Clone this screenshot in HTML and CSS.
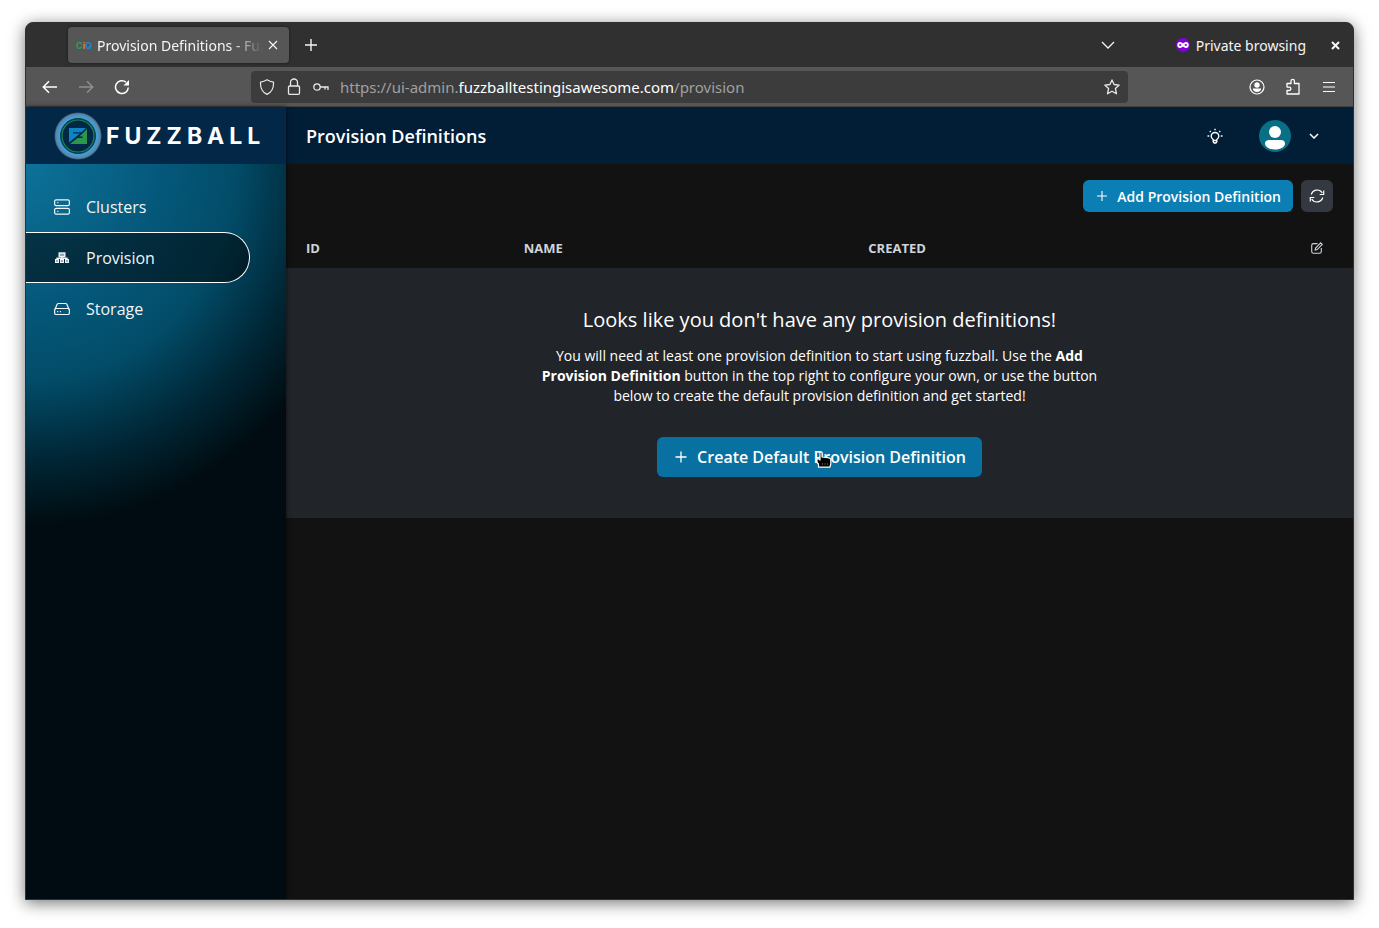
FILE: index.html
```html
<!DOCTYPE html>
<html lang="en">
<head>
<meta charset="utf-8">
<title>Provision Definitions - Fuzzball</title>
<link rel="stylesheet" href="styles.css">
</head>
<body>
<div class="window">
  <div class="tabbar">
    <div class="tab">
      <span class="favicon" aria-hidden="true"><span class="fav-c">C</span><span class="fav-i">i</span><span class="fav-q">Q</span></span>
      <span class="tab-title">Provision Definitions - Fuzzball</span>
      <button class="tab-close" aria-label="Close tab"><svg width="10" height="10" viewBox="0 0 10 10"><path d="M1 1l8 8M9 1l-8 8" stroke="currentColor" stroke-width="1.1"/></svg></button>
    </div>
    <button class="chrome-button" aria-label="New tab"><svg width="14" height="14" viewBox="0 0 14 14"><path d="M7 1v12M1 7h12" stroke="currentColor" stroke-width="1.4"/></svg></button>
    <span class="spacer"></span>
    <button class="chrome-button list-tabs" aria-label="List all tabs"><svg width="14" height="8" viewBox="0 0 14 8" fill="none"><path d="M1 1l6 6 6-6" stroke="currentColor" stroke-width="1.3"/></svg></button>
    <span class="private"><svg width="14" height="14" viewBox="0 0 14 14"><circle cx="7" cy="7" r="7" fill="#8000d7"/><path d="M7 7C5.500 4.500 2.200 4.200 2.200 7S5.500 9.500 7 7s4.800-2.800 4.800 0S8.500 9.500 7 7z" fill="none" stroke="#fff" stroke-width="1.900"/></svg>Private browsing</span>
    <button class="window-close" aria-label="Close window"><svg width="9" height="9" viewBox="0 0 9 9"><path d="M1 1l7 7M8 1l-7 7" stroke="currentColor" stroke-width="2"/></svg></button>
  </div>
  <div class="toolbar">
    <button class="chrome-button" aria-label="Back"><svg width="16" height="16" viewBox="0 0 16 16" fill="none" stroke="currentColor" stroke-width="1.500"><path d="M15 8H1.500M7 2.200L1.300 8 7 13.800"/></svg></button>
    <button class="chrome-button" aria-label="Forward" disabled><svg width="16" height="16" viewBox="0 0 16 16" fill="none" stroke="currentColor" stroke-width="1.500"><path d="M1 8h13.500M9 2.200L14.700 8 9 13.800"/></svg></button>
    <button class="chrome-button" aria-label="Reload"><svg width="16" height="16" viewBox="0 0 16 16" fill="none"><path d="M14.300 8.500A6.400 6.400 0 1 1 12 3.200" stroke="currentColor" stroke-width="1.500"/><path d="M15 1v5.500H9.500z" fill="currentColor"/></svg></button>
    <span class="spring"></span>
    <div class="urlbar">
      <svg width="16" height="16" viewBox="0 0 16 16" fill="none" stroke="currentColor" stroke-width="1.200"><path d="M8 .8c2 1.300 4 2 6.500 2.300.3 6-1.500 10-6.500 12.300C3 13.100 1.200 9.100 1.500 3.100 4 2.800 6 2.100 8 .8z" stroke-linejoin="round"/></svg>
      <svg width="16" height="18" viewBox="0 0 16 18" fill="none" stroke="currentColor" stroke-width="1.300"><rect x="2.500" y="8" width="11" height="8.300" rx="1.200"/><path d="M4.500 8V4.500a3.500 3.500 0 0 1 7 0V8"/></svg>
      <svg width="16" height="16" viewBox="0 0 16 16" fill="none" stroke="currentColor" stroke-width="1.300"><circle cx="4" cy="8" r="3.200"/><path d="M7.200 8H15v3M12 8v2.500"/></svg>
      <span class="url" role="textbox" aria-label="Address">https://ui-admin.<b>fuzzballtestingisawesome.com</b>/provision</span>
      <button class="star" aria-label="Bookmark this page"><svg width="16" height="16" viewBox="0 0 16 16" fill="none" stroke="currentColor" stroke-width="1.300" stroke-linejoin="round"><path d="M8 .9l2.100 4.600 5.100.6-3.800 3.400 1.100 5.300L8 12.200l-4.500 2.600 1.100-5.300L.8 6.100l5.100-.6z"/></svg></button>
    </div>
    <span class="spring"></span>
    <button class="chrome-button" aria-label="Account"><svg width="16" height="16" viewBox="0 0 16 16"><circle cx="8" cy="8" r="7" fill="none" stroke="currentColor" stroke-width="1.200"/><circle cx="8" cy="6" r="2.700" fill="currentColor"/><path d="M3.800 9.500h8.400c0 2-1.800 3.500-4.200 3.500s-4.200-1.500-4.200-3.500z" fill="currentColor"/></svg></button>
    <button class="chrome-button" aria-label="Extensions"><svg width="16" height="18" viewBox="0 0 16 18" fill="none" stroke="currentColor" stroke-width="1.300" stroke-linejoin="round"><path d="M2 9V5.500h4V3a1.700 1.700 0 0 1 3.400 0v2.500H14V16H2v-3.500h2.200a1.700 1.700 0 0 0 0-3.400H2z"/></svg></button>
    <button class="chrome-button" aria-label="Menu"><svg width="12" height="12" viewBox="0 0 12 12" stroke="currentColor" stroke-width="1.200"><path d="M0 1.500h12M0 6h12M0 10.500h12"/></svg></button>
  </div>
  <div class="app">
    <aside class="sidebar">
      <div class="brand">
        <svg class="brand-mark" width="48" height="48" viewBox="0 0 48 48">
          <defs><radialGradient id="glow"><stop offset=".76" stop-color="#38a3dd"/><stop offset=".84" stop-color="#4f93c2"/><stop offset=".93" stop-color="#5d81a3"/><stop offset="1" stop-color="#5d81a3" stop-opacity="0"/></radialGradient></defs>
          <circle cx="24" cy="24" r="24" fill="url(#glow)"/>
          <circle cx="24" cy="24" r="17.500" fill="#022747" stroke="#0a3f60"/>
          <circle cx="24" cy="24" r="16" fill="none" stroke="#218a48" stroke-width="1.200"/>
          <path d="M15 16h17l-4.500 4.200H19v1.300h7L15 30.500z" fill="#0c85c4"/>
          <path d="M33 17v15H16l7.500-6h5v-1.500h-3.300L29 21z" fill="#28984b"/>
        </svg>
        <span class="wordmark">FUZZBALL</span>
      </div>
      <nav class="nav">
        <a class="nav-item" href="#clusters"><svg width="16" height="16" viewBox="0 0 16 16" fill="none" stroke="currentColor" stroke-width="1.200"><rect x=".6" y=".8" width="14.800" height="5.800" rx="1.600"/><rect x=".6" y="9.400" width="14.800" height="5.800" rx="1.600"/><path d="M3 3.700h1.500M3 12.300h1.500" stroke-opacity=".7"/></svg>Clusters</a>
        <a class="nav-item active" href="#provision" aria-current="page"><svg width="16" height="16" viewBox="0 0 16 16" fill="none" stroke="currentColor" stroke-width="1.400"><rect x="5.200" y="3" width="5.600" height="3.600" fill="currentColor" fill-opacity=".6"/><path d="M8 6.500V10M3 10V8.200h10V10"/><rect x="1.700" y="9.700" width="2.600" height="2.600"/><rect x="6.700" y="9.700" width="2.600" height="2.600"/><rect x="11.700" y="9.700" width="2.600" height="2.600"/></svg>Provision</a>
        <a class="nav-item" href="#storage"><svg width="16" height="16" viewBox="0 0 16 16" fill="none" stroke="currentColor" stroke-width="1.200"><rect x=".6" y="7.500" width="14.800" height="6" rx="1.600"/><path d="M1 8.500l2-5c.3-.7.8-1 1.500-1h7c.7 0 1.200.3 1.500 1l2 5"/><path d="M3 10.700h1.200M5.800 10.700H7"/></svg>Storage</a>
      </nav>
    </aside>
    <div class="content">
      <header class="header">
        <h1>Provision Definitions</h1>
        <button class="plain theme" aria-label="Toggle theme"><svg width="16" height="16" viewBox="0 0 16 16" fill="none" stroke="currentColor" stroke-width="1.400"><path d="M6.200 11.500C4.800 10.700 4.200 9.600 4.200 8.300a3.800 3.800 0 0 1 7.600 0c0 1.300-.6 2.400-2 3.200v2.200l-1 1.300H7.200l-1-1.300z"/><path d="M6.200 12.500h3.600"/><path d="M8 .7v1.600M2.700 3l1.100 1.100M13.300 3l-1.100 1.100M.5 8h1.700M13.800 8h1.700"/></svg></button>
        <button class="plain account" aria-label="Account menu"><svg width="32" height="32" viewBox="0 0 32 32"><circle cx="16" cy="16" r="16" fill="#077084"/><circle cx="16" cy="12" r="6" fill="#fff"/><path d="M10 20h12c2.500 0 4 1.500 4 3.500 0 3.500-4.500 6-10 6s-10-2.500-10-6c0-2 1.500-3.500 4-3.500z" fill="#fff"/></svg><svg width="10" height="6" viewBox="0 0 10 6" fill="none"><path d="M1 1l4 4 4-4" stroke="currentColor" stroke-width="1.500"/></svg></button>
      </header>
      <main>
        <div class="actions">
          <button class="primary add"><svg width="10" height="10" viewBox="0 0 10 10"><path d="M5 0v10M0 5h10" stroke="currentColor" stroke-width="1.100"/></svg>Add Provision Definition</button>
          <button class="refresh" aria-label="Refresh"><svg width="16" height="16" viewBox="0 0 16 16" fill="none" stroke="currentColor" stroke-width="1.200"><path d="M2.300 6.500a6 6 0 0 1 11-1.500M14.700 2.500v4h-4M13.700 9.500a6 6 0 0 1-11 1.500M1.300 13.500v-4h4"/></svg></button>
        </div>
        <table class="table">
          <thead>
            <tr><th class="col-id">ID</th><th class="col-name">NAME</th><th>CREATED</th><th class="col-edit"><button class="plain" aria-label="Edit columns"><svg width="12" height="12" viewBox="0 0 12 12" fill="none" stroke="currentColor" stroke-width="1.100"><path d="M6.500 1.600H2.500Q.7 1.600.7 3.400v6Q.7 11.300 2.500 11.300h6q1.800 0 1.800-1.900V6"/><path d="M4.200 8l.4-2L9.700.9l1.600 1.600L6.200 7.600z"/></svg></button></th></tr>
          </thead>
          <tbody>
            <tr><td colspan="4">
              <div class="empty">
                <h2>Looks like you don't have any provision definitions!</h2>
                <p>You will need at least one provision definition to start using fuzzball. Use the <strong>Add Provision Definition</strong> button in the top right to configure your own, or use the button below to create the default provision definition and get started!</p>
                <button class="primary create"><svg width="12" height="12" viewBox="0 0 12 12"><path d="M6 .5v11M.5 6h11" stroke="currentColor" stroke-width="1.300"/></svg>Create Default Provision Definition
                  <svg class="pointer" width="16" height="17" viewBox="0 0 16 17"><path d="M4 1.500Q5 .3 6 1.500V6l7 .8q1.800.4 1.800 2V13l-1 3.200H2.500V13L1 11.500V7.800h1.500L4 9z" fill="#000" stroke="#fff" stroke-width="1.200" stroke-linejoin="round"/><path d="M6.500 12v2M9 12v2M11.500 12v2" stroke="#555" stroke-width=".8"/></svg>
                </button>
              </div>
            </td></tr>
          </tbody>
        </table>
      </main>
    </div>
  </div>
</div>
</body>
</html>
```
FILE: styles.css
```css
* { box-sizing: border-box; }
body {
  margin: 0;
  padding: 22px 25px 28px;
  min-height: 100vh;
  display: flex;
  background: #fff;
  color: #fff;
  font-family: "Open Sans", sans-serif;
}
button {
  font: inherit;
  color: inherit;
  background: none;
  border: 0;
  padding: 0;
  display: flex;
  align-items: center;
  justify-content: center;
}
svg { flex: none; display: block; }

/* Browser window */
.window {
  flex: 1;
  min-width: 0;
  display: flex;
  flex-direction: column;
  border: 1px solid #303030;
  border-radius: 8px 8px 0 0;
  background: #303030;
  overflow: hidden;
  box-shadow: 0 3px 16px rgba(0, 0, 0, .55);
}
.tabbar {
  height: 44px;
  padding: 0 8px 0 42px;
  display: flex;
  align-items: center;
  font: 14px "Noto Sans", sans-serif;
  color: #f5f5f5;
}
.tab {
  width: 221px;
  height: 36px;
  padding: 0 6px 0 8px;
  display: flex;
  align-items: center;
  border-radius: 4px;
  background: #565656;
  box-shadow: 0 0 3px rgba(0, 0, 0, .5);
}
.favicon { width: 21px; font: bold 9px Inter, sans-serif; }
.fav-c { color: #26a05a; }
.fav-i { color: #d98a2b; }
.fav-q { color: #1c86c8; }
.tab-title {
  flex: 1;
  min-width: 0;
  overflow: hidden;
  white-space: nowrap;
  mask-image: linear-gradient(to left, transparent, #000 32px);
}
.tab-close { width: 20px; height: 20px; }
.chrome-button { width: 36px; height: 32px; }
.tab + .chrome-button { margin-left: 4px; }
.chrome-button:disabled { color: #8e8e8e; }
.spacer { flex: 1; }
.list-tabs { margin-right: 50px; }
.private { display: flex; align-items: center; gap: 6px; }
.window-close { width: 20px; height: 20px; margin-left: 19px; }
.toolbar {
  height: 40px;
  padding: 0 6px;
  display: flex;
  align-items: center;
  background: #565656;
  border-bottom: 1px solid #404040;
}
.spring { flex: 111; }
.urlbar {
  flex: 861;
  min-width: 0;
  height: 32px;
  padding: 0 8px;
  display: flex;
  align-items: center;
  gap: 11px;
  border-radius: 4px;
  background: #3c3c3c;
  color: #e8e8e8;
}
.url {
  flex: 1;
  min-width: 0;
  overflow: hidden;
  white-space: nowrap;
  color: #a0a0a0;
  font: 15px "Noto Sans", sans-serif;
}
.url b { font-weight: normal; color: #fff; }

/* Application */
.app {
  flex: 1;
  display: flex;
  background: #121212;
}
.sidebar {
  width: 260px;
  display: flex;
  flex-direction: column;
  box-shadow: 0 0 5px rgba(0, 0, 0, .6);
  z-index: 1;
}
.brand {
  height: 57px;
  padding: 0 28px;
  display: flex;
  align-items: center;
  gap: 4px;
  background: #022747;
}
.wordmark {
  font: 700 23px Inter, sans-serif;
  letter-spacing: 5px;
}
.nav {
  flex: 1;
  padding-top: 17px;
  background: radial-gradient(350px 362px at 0 0, #0d7299, #05587b 38%, #024c68 60%, #002635 82%, #000c11);
}
.nav-item {
  height: 51px;
  margin-right: 36px;
  padding-left: 28px;
  display: flex;
  align-items: center;
  gap: 16px;
  color: #f0f5f7;
  font-size: 16px;
  text-decoration: none;
}
.active {
  border: 1px solid #fff;
  border-left: 0;
  border-radius: 0 26px 26px 0;
  background: rgba(0, 0, 0, .5);
}
.content { flex: 1; min-width: 0; }
.header {
  height: 57px;
  padding: 0 34px 0 20px;
  display: flex;
  align-items: center;
  background: #021d36;
}
h1 {
  margin: 0;
  flex: 1;
  font-size: 18px;
  font-weight: 600;
}
.account { gap: 18px; margin-left: 36px; }
.actions {
  padding: 16px 20px;
  display: flex;
  justify-content: flex-end;
  gap: 8px;
}
.primary {
  border-radius: 6px;
  background: #0b7fb4;
  font-weight: 600;
}
.add {
  height: 32px;
  padding: 0 12px 0 14px;
  gap: 10px;
  font-size: 14px;
}
.refresh {
  width: 32px;
  height: 32px;
  border-radius: 6px;
  background: #343840;
}
.table {
  width: 100%;
  border-collapse: collapse;
  table-layout: fixed;
}
th {
  height: 40px;
  padding: 0 0 0 20px;
  text-align: left;
  color: #ced4da;
  font-size: 13px;
  font-weight: 700;
}
.col-id { width: 20.4%; }
.col-name { width: 32.3%; }
.col-edit { width: 62px; }
td { padding: 0; }
.empty {
  padding: 38px 20px 41px;
  display: flex;
  flex-direction: column;
  align-items: center;
  background: #212429;
  text-align: center;
}
h2 {
  margin: 0 0 12px;
  font-size: 20px;
  line-height: 28px;
  font-weight: 400;
}
p {
  max-width: 560px;
  margin: 0 0 31px;
  font-size: 14px;
  line-height: 20px;
}
.create {
  position: relative;
  height: 40px;
  padding: 0 16px 0 18px;
  gap: 10px;
  font-size: 16px;
  background: #0871a1;
}
.pointer {
  position: absolute;
  left: 50%;
  top: 14px;
  margin-left: -3px;
}
```
